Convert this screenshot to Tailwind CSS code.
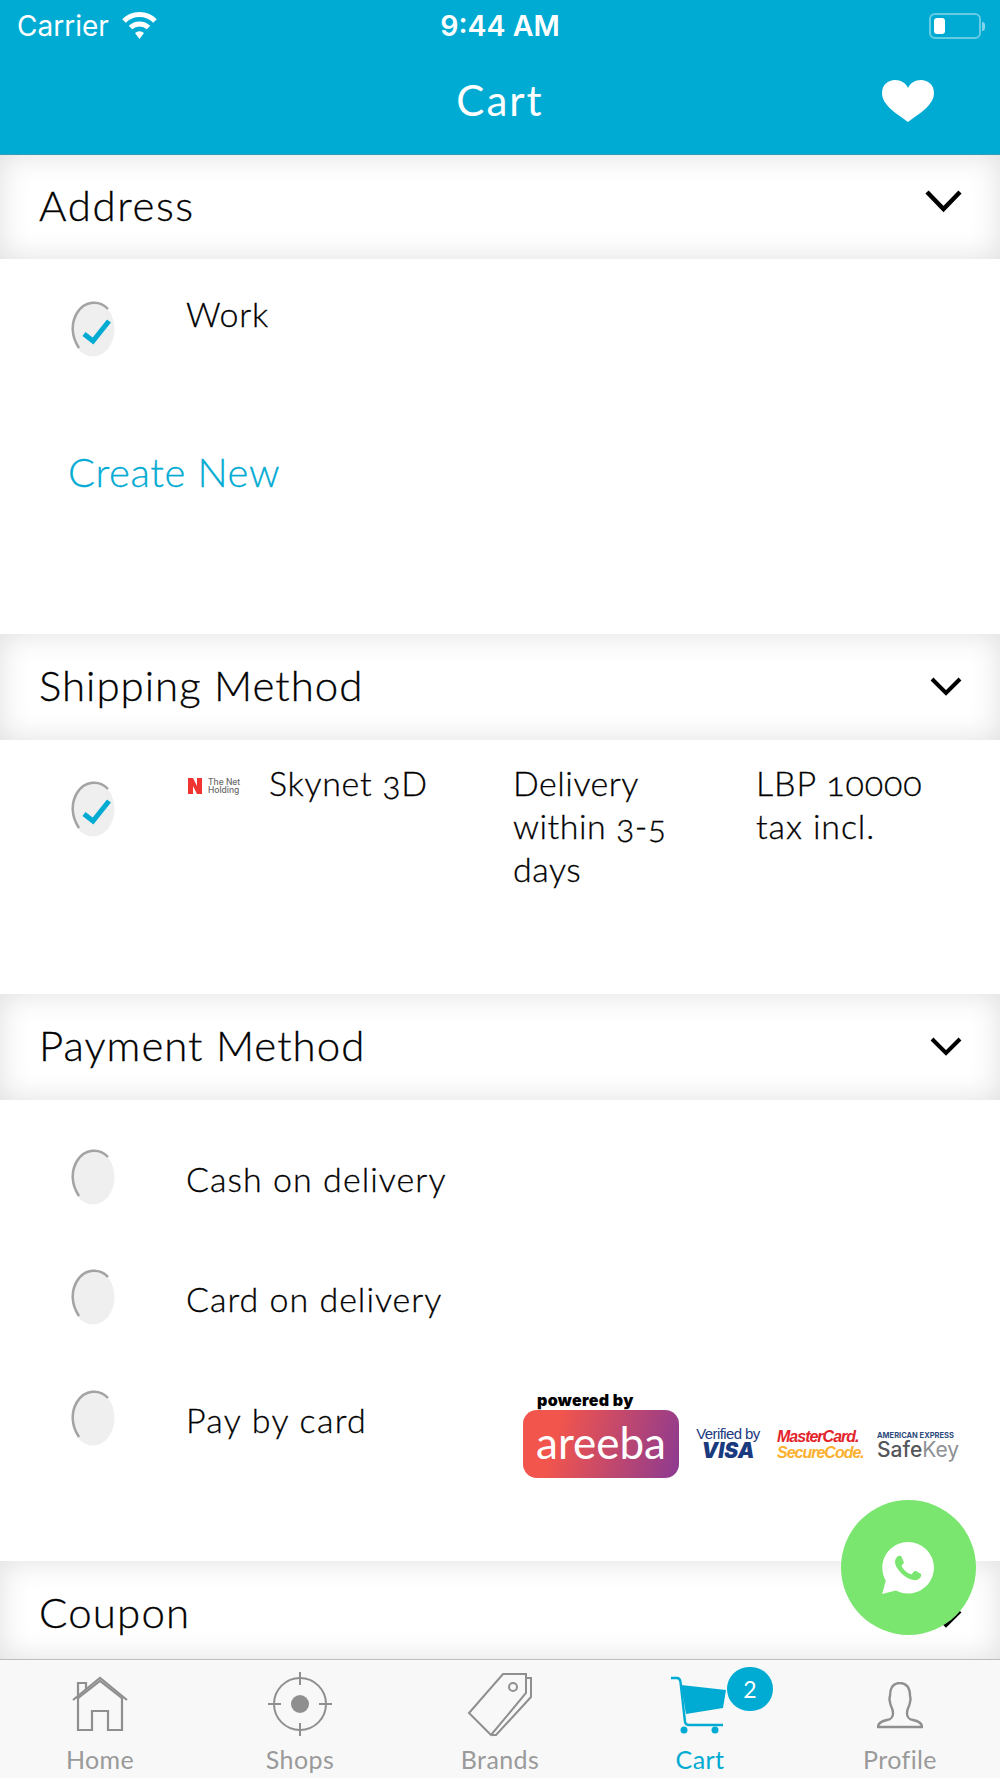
<!DOCTYPE html>
<html lang="en">
<head>
<meta charset="utf-8">
<title>Cart</title>
<script src="https://cdn.jsdelivr.net/npm/@tailwindcss/browser@4"></script>
</head>
<body class="bg-white">
<div class="relative w-[1000px] h-[1778px] overflow-hidden flex flex-col bg-white text-black font-light [-webkit-text-stroke:0.3px] font-['Lato','Open_Sans',sans-serif]">

	<!-- top bar -->
	<header class="h-[155px] shrink-0 bg-[#00abd3] border-b border-[#2f9db8] text-white [-webkit-text-stroke:0]">
		<div class="h-[52px] px-[17px] flex items-center justify-between font-normal font-['Inter',sans-serif]">
			<div class="flex items-center w-[200px] gap-[12px]">
				<span class="text-[28px] leading-none">Carrier</span>
				<svg class="w-[37px] h-[30px] -mt-[3px]" viewBox="0 0 37 30" fill="none" stroke="white" stroke-width="5">
					<path d="M3 11 A22 22 0 0 1 34 11"/>
					<path d="M9.5 17.5 A13 13 0 0 1 27.5 17.5"/>
					<path d="M14 23 l4.500 6 4.500 -6 a7 7 0 0 0 -9 0z" fill="white" stroke="none"/>
				</svg>
			</div>
			<span class="text-[28.500px] font-semibold leading-none -ml-[2px]">9:44 AM</span>
			<div class="w-[200px] flex justify-end items-center -mr-[2px]">
				<div class="w-[52px] h-[26px] rounded-[6px] border-2 border-white/40 p-[3px]">
					<div class="w-[11px] h-full rounded-[3px] bg-white"></div>
				</div>
				<div class="w-[3px] h-[9px] bg-white/50 rounded-r ml-[1px]"></div>
			</div>
		</div>
		<div class="relative h-[96px] flex items-center justify-center">
			<span class="text-[42px] font-normal leading-none tracking-[2px] mt-[-1px]">Cart</span>
			<svg class="absolute left-[882px] top-[28px] w-[52px] h-[42px]" viewBox="0 0 52 42" fill="white">
				<path d="M26 42 C17 35 0 26 0 13 C0 5 6 0 13 0 C19 0 24 3 26 8 C28 3 33 0 39 0 C46 0 52 5 52 13 C52 26 35 35 26 42Z"/>
			</svg>
		</div>
	</header>

	<!-- address -->
	<section class="h-[104px] shrink-0 flex items-center justify-between pl-[39px] pr-[38px] shadow-[inset_0_0_30px_rgba(0,0,0,0.13)]">
		<h2 class="text-[42px] leading-none tracking-[1.600px] -mt-[4px]">Address</h2>
		<svg class="w-[37px] h-[24px] -mt-[12px]" viewBox="0 0 37 24" fill="none" stroke="black" stroke-width="4.500"><path d="M2 3 L18.500 20 L35 3"/></svg>
	</section>
	<div class="h-[375px] shrink-0 flex flex-col">
		<div class="flex pt-[33px] pl-[71px]">
			<svg class="w-[44px] h-[56px] mr-[71px] mt-[9px]" viewBox="0 0 44 56">
				<ellipse cx="22" cy="28" rx="21.500" ry="27.500" fill="#efefef"/>
				<path d="M37 8 C29 -1 14 -1 6 12 C0 22 0 35 8 47" fill="none" stroke="#a3a3a3" stroke-width="2.500"/>
				<path d="M13 33 L22 40 L38 20" fill="none" stroke="#00abd3" stroke-width="5"/>
			</svg>
			<span class="text-[34px] leading-[43px] tracking-[0.700px]">Work</span>
		</div>
		<a class="mt-[95px] ml-[68px] text-[40px] leading-none tracking-[0.600px] text-[#00abd3]">Create New</a>
	</div>

	<!-- shipping -->
	<section class="h-[106px] shrink-0 flex items-center justify-between pl-[39px] pr-[38px] shadow-[inset_0_0_30px_rgba(0,0,0,0.13)]">
		<h2 class="text-[42px] leading-none tracking-[1px] -mt-[4px]">Shipping Method</h2>
		<svg class="w-[32px] h-[20px] -mt-[2px]" viewBox="0 0 32 20" fill="none" stroke="black" stroke-width="4"><path d="M2 3 L16 17 L30 3"/></svg>
	</section>
	<div class="h-[254px] shrink-0 flex pt-[21px] pl-[71px]">
		<svg class="w-[44px] h-[56px] mr-[71px] mt-[20px] shrink-0" viewBox="0 0 44 56">
			<ellipse cx="22" cy="28" rx="21.500" ry="27.500" fill="#efefef"/>
			<path d="M37 8 C29 -1 14 -1 6 12 C0 22 0 35 8 47" fill="none" stroke="#a3a3a3" stroke-width="2.500"/>
			<path d="M13 33 L22 40 L38 20" fill="none" stroke="#00abd3" stroke-width="5"/>
		</svg>
		<div class="w-[81px] shrink-0 flex items-start gap-[6px] pt-[17px] ml-[2px] [-webkit-text-stroke:0]">
			<svg class="w-[14px] h-[16px] shrink-0" viewBox="0 0 14 16"><path d="M0 0H5L9 8V0H14V16H9L5 8V16H0Z" fill="#ef3431"/></svg>
			<span class="text-[8.500px] leading-[8px] font-medium text-[#6a6a6a] font-['Inter',sans-serif] whitespace-nowrap">The Net<br>Holding</span>
		</div>
		<span class="w-[244px] shrink-0 text-[34px] leading-[43px] tracking-[0.700px] oldstyle-nums">Skynet 3D</span>
		<span class="w-[243px] shrink-0 text-[34px] leading-[43px] tracking-[0.500px] oldstyle-nums">Delivery<br>within 3-5<br>days</span>
		<span class="text-[34px] leading-[43px] tracking-[0.900px] oldstyle-nums">LBP 10000<br>tax incl.</span>
	</div>

	<!-- payment -->
	<section class="h-[106px] shrink-0 flex items-center justify-between pl-[39px] pr-[38px] shadow-[inset_0_0_30px_rgba(0,0,0,0.13)]">
		<h2 class="text-[42px] leading-none tracking-[1px] -mt-[4px]">Payment Method</h2>
		<svg class="w-[32px] h-[20px] -mt-[2px]" viewBox="0 0 32 20" fill="none" stroke="black" stroke-width="4"><path d="M2 3 L16 17 L30 3"/></svg>
	</section>
	<div class="h-[461px] shrink-0 flex flex-col pl-[71px] pt-[49px] gap-[64px]">
		<div class="flex items-center h-[56px]">
			<svg class="w-[44px] h-[56px] mr-[71px]" viewBox="0 0 44 56">
				<ellipse cx="22" cy="28" rx="21.500" ry="27.500" fill="#efefef"/>
				<path d="M37 8 C29 -1 14 -1 6 12 C0 22 0 35 8 47" fill="none" stroke="#a3a3a3" stroke-width="2.500"/>
			</svg>
			<span class="text-[34px] leading-[43px] tracking-[1.050px] mt-[2px]">Cash on delivery</span>
		</div>
		<div class="flex items-center h-[56px]">
			<svg class="w-[44px] h-[56px] mr-[71px]" viewBox="0 0 44 56">
				<ellipse cx="22" cy="28" rx="21.500" ry="27.500" fill="#efefef"/>
				<path d="M37 8 C29 -1 14 -1 6 12 C0 22 0 35 8 47" fill="none" stroke="#a3a3a3" stroke-width="2.500"/>
			</svg>
			<span class="text-[34px] leading-[43px] tracking-[1px] mt-[2px]">Card on delivery</span>
		</div>
		<div class="flex items-center h-[56px] mt-[1px]">
			<svg class="w-[44px] h-[56px] mr-[71px]" viewBox="0 0 44 56">
				<ellipse cx="22" cy="28" rx="21.500" ry="27.500" fill="#efefef"/>
				<path d="M37 8 C29 -1 14 -1 6 12 C0 22 0 35 8 47" fill="none" stroke="#a3a3a3" stroke-width="2.500"/>
			</svg>
			<span class="w-[337px] text-[34px] leading-[43px] tracking-[1.300px] mt-[2px]">Pay by card</span>
			<div class="flex items-end gap-[16px] mt-[32px] [-webkit-text-stroke:0]">
				<div class="w-[156px] shrink-0">
					<div class="pl-[14px] text-[16px] leading-[20px] tracking-[0.300px] font-black font-['Inter',sans-serif]">powered by</div>
					<div class="h-[68px] rounded-[14px] bg-linear-[105deg,#f2554c_22%,#8c3a91_100%] flex items-center justify-center text-white text-[44px] leading-none font-normal font-['Lato',sans-serif] pb-[4px]">areeba</div>
				</div>
				<div class="w-[66px] shrink-0 text-center text-[#1a3a80] font-normal mb-[17px]">
					<div class="text-[15px] leading-[15px] tracking-[-0.6px] font-['Liberation_Sans',sans-serif] whitespace-nowrap">Verified by</div>
					<div class="text-[21px] leading-[20px] font-black italic font-['Inter',sans-serif]">VISA</div>
				</div>
				<div class="w-[82px] shrink-0 font-bold italic mb-[17px] text-[16px] leading-[16px] tracking-[-1px] font-['Liberation_Sans',sans-serif] whitespace-nowrap">
					<div class="text-[#e3242b]">MasterCard.</div>
					<div class="text-[#fbb12f]">SecureCode.</div>
				</div>
				<div class="w-[80px] shrink-0 ml-[2px] mb-[18px] font-['Inter',sans-serif] text-[#55565a] whitespace-nowrap">
					<div class="text-[7.500px] leading-[8px] font-bold text-[#2c4a7c]">AMERICAN EXPRESS</div>
					<div class="text-[21px] leading-[20px] font-medium">Safe<span class="font-normal text-[#8e9093]">Key</span></div>
				</div>
			</div>
		</div>
	</div>

	<!-- coupon -->
	<section class="h-[98px] shrink-0 flex items-center justify-between pl-[39px] pr-[38px] shadow-[inset_0_0_30px_rgba(0,0,0,0.13)]">
		<h2 class="text-[42px] leading-none tracking-[1.200px] mt-[4px]">Coupon</h2>
		<svg class="w-[32px] h-[20px] mt-[16px]" viewBox="0 0 32 20" fill="none" stroke="black" stroke-width="4"><path d="M2 3 L16 17 L30 3"/></svg>
	</section>

	<!-- tab bar -->
	<nav class="flex-1 grid grid-cols-5 border-t border-[#bdbdbd] bg-[#f8f8f8] text-[25px] leading-none font-normal tracking-[0.400px] text-[#9a9a9a] [-webkit-text-stroke:0]">
		<a class="flex flex-col items-center pt-[16px]">
			<svg class="w-[56px] h-[58px]" viewBox="0 0 56 58" fill="none" stroke="#8f8f8f" stroke-width="2.200">
				<path d="M1 24 L28 2 L55 24"/>
				<path d="M5 23 L28 5 L51 23"/>
				<path d="M6 22 V54 H20 V35 H36 V54 H50 V22"/>
				<path d="M6 22 V7 H14 V14"/>
			</svg>
			<span class="mt-[13px]">Home</span>
		</a>
		<a class="flex flex-col items-center pt-[12px]">
			<svg class="w-[66px] h-[64px]" viewBox="0 0 66 64" fill="none" stroke="#8f8f8f" stroke-width="2">
				<circle cx="33" cy="32" r="26"/>
				<path d="M33 0 V13 M33 51 V64 M1 32 H14 M52 32 H65"/>
				<circle cx="33" cy="32" r="9" fill="#8f8f8f" stroke="none"/>
			</svg>
			<span class="mt-[11px]">Shops</span>
		</a>
		<a class="flex flex-col items-center pt-[11px]">
			<svg class="w-[66px] h-[66px]" viewBox="0 0 66 66" fill="none" stroke="#8f8f8f" stroke-width="2">
				<path d="M36 3 H59 V22 L24 64 L2 42Z"/>
				<path d="M59 7 H64 V26 L29 64 L25 64"/>
				<circle cx="46" cy="16" r="4"/>
			</svg>
			<span class="mt-[10px]">Brands</span>
		</a>
		<a class="relative flex flex-col items-center pt-[16px] text-[#00abd3]">
			<svg class="w-[56px] h-[58px] -ml-[2px]" viewBox="0 0 56 58" fill="#00abd3">
				<path d="M10 9 L55 14 L52 32 L15 38Z"/>
				<path d="M0 2 H6 C8 2 9 3 9.500 6 L14 46 C14.500 48 16 49 18 49 H52" fill="none" stroke="#00abd3" stroke-width="2.400"/>
				<circle cx="13" cy="54" r="3.500"/>
				<circle cx="44" cy="54" r="3.500"/>
			</svg>
			<span class="mt-[13px]">Cart</span>
			<span class="absolute left-[127px] top-[7px] w-[46px] h-[44px] rounded-full bg-[#00abd3] text-white text-[23px] flex items-center justify-center">2</span>
		</a>
		<a class="flex flex-col items-center pt-[22px]">
			<svg class="w-[46px] h-[48px]" viewBox="0 0 46 48" fill="none" stroke="#8f8f8f" stroke-width="2.400">
				<path d="M1 45 H45 C45 41 41 39 36 38 C31 37 30 35 30 31 C30 26 33 24 33 20 C34 17 33.500 16 33 14 C33 5 29 1 23 1 C17 1 13 5 13 14 C12.500 16 12 17 13 20 C13 24 16 26 16 31 C16 35 15 37 10 38 C5 39 1 41 1 45Z"/>
			</svg>
			<span class="mt-[17px]">Profile</span>
		</a>
	</nav>

	<!-- whatsapp button -->
	<div class="absolute left-[841px] top-[1500px] w-[135px] h-[135px] rounded-full bg-[#7be66f] flex items-center justify-center">
		<svg class="w-[52px] h-[52px] -ml-[1px]" viewBox="0 0 24 24">
			<path d="M20.463 3.488A11.815 11.815 0 0 0 12.050 0C5.495 0 .16 5.335.157 11.892c0 2.096.547 4.142 1.588 5.945L.057 24l6.305-1.654a11.882 11.882 0 0 0 5.683 1.448h.005c6.554 0 11.890-5.335 11.893-11.893a11.821 11.821 0 0 0-3.480-8.413Z" fill="white"/>
			<path d="M17.472 14.382c-.297-.149-1.758-.867-2.030-.967-.273-.099-.471-.148-.670.150-.197.297-.767.966-.940 1.164-.173.199-.347.223-.644.075-.297-.150-1.255-.463-2.390-1.475-.883-.788-1.480-1.761-1.653-2.059-.173-.297-.018-.458.130-.606.134-.133.298-.347.446-.520.149-.174.198-.298.298-.497.099-.198.050-.371-.025-.520-.075-.149-.669-1.612-.916-2.207-.242-.579-.487-.500-.669-.510-.173-.008-.371-.010-.570-.010-.198 0-.520.074-.792.372-.272.297-1.040 1.016-1.040 2.479 0 1.462 1.065 2.875 1.213 3.074.149.198 2.096 3.200 5.077 4.487.709.306 1.262.489 1.694.625.712.227 1.360.195 1.871.118.571-.085 1.758-.719 2.006-1.413.248-.694.248-1.289.173-1.413-.074-.124-.272-.198-.570-.347" fill="#7be66f"/>
		</svg>
	</div>
</div>
</body>
</html>
